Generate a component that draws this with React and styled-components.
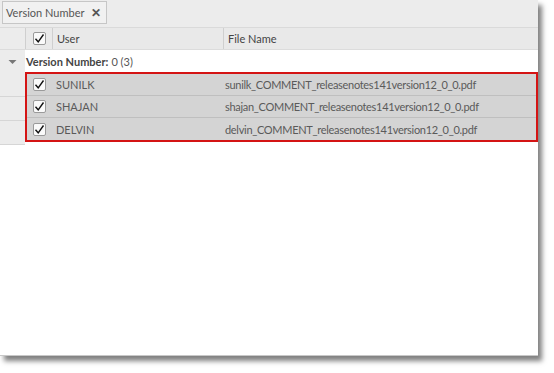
import styled, { createGlobalStyle } from 'styled-components';

const GlobalStyle = createGlobalStyle`
  html, body {
    margin: 0;
    padding: 0;
    background: #fff;
  }
  body {
    font-family: Lato, "Open Sans", "Liberation Sans", sans-serif;
  }
`;

const Page = styled.div`
  width: 554px;
  height: 373px;
  background: #fff;
`;

const Panel = styled.div`
  width: 538px;
  height: 356px;
  background: #fff;
  border-bottom: 1px solid #c8c8c8;
  box-sizing: border-box;
  box-shadow: 4px 5px 5px rgba(0, 0, 0, 0.5);
  display: flex;
  flex-direction: column;
`;

const GroupBar = styled.div`
  height: 28px;
  background: #ececec;
  border-bottom: 1px solid #dadada;
  box-sizing: border-box;
  display: flex;
  align-items: center;
  padding-left: 2px;
`;

const GroupTab = styled.div`
  height: 23px;
  box-sizing: border-box;
  border: 1px solid #c6c6c6;
  background: #f1f1f1;
  display: flex;
  align-items: center;
  gap: 7px;
  padding: 0 5px 0 3px;
  font-size: 11px;
  color: #555;
  margin-top: -2px;
`;

const Close = styled.span`
  font-weight: 700;
  font-size: 12px;
  color: #555;
`;

const Row = styled.div`
  display: grid;
  grid-template-columns: 25px 27px 171px 1fr;
  height: ${(p) => p.$h || 22}px;
  box-sizing: border-box;
  border-bottom: 1px solid #d6d6d6;
`;

const Indent = styled.div`
  background: #ececec;
  border-bottom: ${(p) => (p.$line ? '1px solid #d6d6d6' : 'none')};
  display: flex;
  align-items: center;
  justify-content: center;
`;

const Cell = styled.div`
  display: flex;
  align-items: center;
  padding-left: ${(p) => p.$pad || 4}px;
  font-size: 11px;
  letter-spacing: ${(p) => p.$tight || 0}px;
  color: ${(p) => p.$color || '#5a5a5a'};
  border-left: ${(p) => (p.$divider ? '1px solid #cfcfcf' : 'none')};
  white-space: nowrap;
  overflow: hidden;
`;

const CheckCell = styled(Cell)`
  justify-content: center;
  padding-left: 0;
`;

const Box = styled.span`
  width: 13px;
  height: 13px;
  box-sizing: border-box;
  border: 1px solid #9a9a9a;
  border-radius: 2px;
  background: #fafafa;
  display: flex;
  align-items: center;
  justify-content: center;
`;

const Header = styled(Row)`
  background: #e9e9e9;
  border-bottom: 1px solid #dcdcdc;
`;

const GroupRow = styled.div`
  display: flex;
  height: 23px;
  background: #fff;
`;

const GroupLabel = styled.div`
  display: flex;
  align-items: center;
  padding-left: 1px;
  font-size: 11px;
  color: #555;
  b {
    color: #444;
    margin-right: 3px;
  }
`;

const Selection = styled.div`
  margin-left: 25px;
  border: 2px solid #d41414;
  background: #d4d4d4;
  margin-top: -1px;
`;

const DataRow = styled.div`
  display: grid;
  grid-template-columns: 25px 171px 1fr;
  height: 22px;
  box-sizing: border-box;
  border-bottom: ${(p) => (p.$last ? 'none' : '1px solid #bfbfbf')};
`;

const Rows = styled.div`
  position: relative;
`;

const IndentStrip = styled.div`
  position: absolute;
  left: 0;
  top: 0;
  width: 25px;
  display: flex;
  flex-direction: column;
`;

const Check = () => (
  <Box>
    <svg width="11" height="11" viewBox="0 0 11 11">
      <path d="M1.5 5.8 L4.2 8.8 L9.5 1.5" fill="none" stroke="#111" strokeWidth="1.4" />
    </svg>
  </Box>
);

const Triangle = () => (
  <svg width="9" height="6" viewBox="0 0 9 6">
    <path d="M0.5 1 L8.5 1 L4.5 5 Z" fill="#777" />
  </svg>
);

const rows = [
  { user: 'SUNILK', file: 'sunilk_COMMENT_releasenotes141version12_0_0.pdf' },
  { user: 'SHAJAN', file: 'shajan_COMMENT_releasenotes141version12_0_0.pdf' },
  { user: 'DELVIN', file: 'delvin_COMMENT_releasenotes141version12_0_0.pdf' },
];

const App = () => (
  <Page>
    <GlobalStyle />
    <Panel>
      <GroupBar>
        <GroupTab>
          Version Number <Close>✕</Close>
        </GroupTab>
      </GroupBar>
      <Header $h={22}>
        <Indent />
        <CheckCell $divider>
          <Check />
        </CheckCell>
        <Cell $divider $color="#444">User</Cell>
        <Cell $divider $color="#444">File Name</Cell>
      </Header>
      <GroupRow>
        <Indent style={{ width: 25 }}>
          <Triangle />
        </Indent>
        <GroupLabel>
          <b>Version Number:</b> 0 (3)
        </GroupLabel>
      </GroupRow>
      <Rows>
        <IndentStrip>
          {rows.map((r) => (
            <Indent key={r.user} $line style={{ height: 23 }} />
          ))}
        </IndentStrip>
        <Selection>
          {rows.map((r, i) => (
            <DataRow key={r.user} $last={i === rows.length - 1}>
              <CheckCell>
                <Check />
              </CheckCell>
              <Cell $pad={4}>{r.user}</Cell>
              <Cell $pad={2} $tight={-0.3}>{r.file}</Cell>
            </DataRow>
          ))}
        </Selection>
      </Rows>
    </Panel>
  </Page>
);

export default App;
